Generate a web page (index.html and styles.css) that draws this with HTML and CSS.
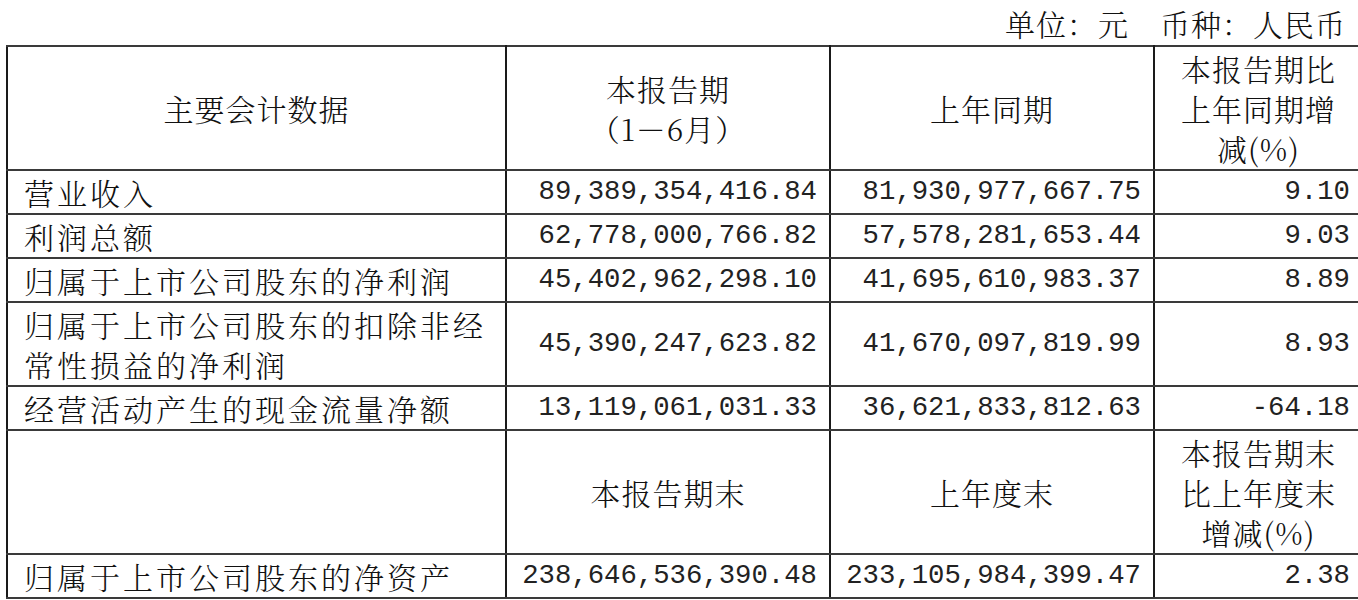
FILE: index.html
```html
<!DOCTYPE html>
<html lang="zh-CN">
<head>
<meta charset="utf-8">
<title>主要会计数据</title>
<link rel="stylesheet" href="styles.css">
</head>
<body>
<div class="page">
  <div class="unit">单位：元　币种：人民币</div>
  <div class="wrap">
    <table class="data">
      <colgroup>
        <col class="c1"><col class="c2"><col class="c3"><col class="c4">
      </colgroup>
      <tr class="head">
        <td class="hc">主要会计数据</td>
        <td class="hc">本报告期<br>（1－6月）</td>
        <td class="hc">上年同期</td>
        <td class="hc">本报告期比<br>上年同期增<br>减(%)</td>
      </tr>
      <tr>
        <td class="label">营业收入</td>
        <td class="num">89,389,354,416.84</td>
        <td class="num">81,930,977,667.75</td>
        <td class="num">9.10</td>
      </tr>
      <tr>
        <td class="label">利润总额</td>
        <td class="num">62,778,000,766.82</td>
        <td class="num">57,578,281,653.44</td>
        <td class="num">9.03</td>
      </tr>
      <tr>
        <td class="label">归属于上市公司股东的净利润</td>
        <td class="num">45,402,962,298.10</td>
        <td class="num">41,695,610,983.37</td>
        <td class="num">8.89</td>
      </tr>
      <tr>
        <td class="label">归属于上市公司股东的扣除非经常性损益的净利润</td>
        <td class="num">45,390,247,623.82</td>
        <td class="num">41,670,097,819.99</td>
        <td class="num">8.93</td>
      </tr>
      <tr>
        <td class="label">经营活动产生的现金流量净额</td>
        <td class="num">13,119,061,031.33</td>
        <td class="num">36,621,833,812.63</td>
        <td class="num">-64.18</td>
      </tr>
      <tr class="head">
        <td class="hc"></td>
        <td class="hc">本报告期末</td>
        <td class="hc">上年度末</td>
        <td class="hc">本报告期末<br>比上年度末<br>增减(%)</td>
      </tr>
      <tr>
        <td class="label">归属于上市公司股东的净资产</td>
        <td class="num">238,646,536,390.48</td>
        <td class="num">233,105,984,399.47</td>
        <td class="num">2.38</td>
      </tr>
    </table>
  </div>
</div>
</body>
</html>
```

FILE: styles.css
```css
html, body {
  margin: 0;
  padding: 0;
  background: #fff;
  overflow: hidden;
}

.page {
  width: 1358px;
  overflow: hidden;
  color: #111;
  font-family: "Noto Serif CJK SC", "Noto Sans CJK SC", serif;
  font-size: 30px;
  font-weight: 300;
}

.unit {
  height: 45px;
  line-height: 46px;
  text-align: right;
  padding-right: 12px;
  letter-spacing: 1px;
}

.wrap {
  padding-left: 6px;
  width: 1400px;
}

.data {
  border-collapse: collapse;
  table-layout: fixed;
  width: 1356px;
}

.c1 { width: 499px; }
.c2 { width: 324px; }
.c3 { width: 324px; }
.c4 { width: 209px; }

.data td {
  border-top: 2px solid #3a3a3a;
  border-bottom: 2px solid #3a3a3a;
  border-left: 2px solid #1a1a1a;
  border-right: 2px solid #1a1a1a;
  line-height: 40px;
  padding: 1px 12px;
  vertical-align: middle;
}

.hc {
  text-align: center;
  letter-spacing: 1px;
}

.label {
  text-align: left;
  padding-left: 16px !important;
  letter-spacing: 3px;
}

.num {
  text-align: right;
  font-family: "Liberation Mono", monospace;
  font-size: 27.3px;
  font-weight: 400;
  color: #222;
}
```
